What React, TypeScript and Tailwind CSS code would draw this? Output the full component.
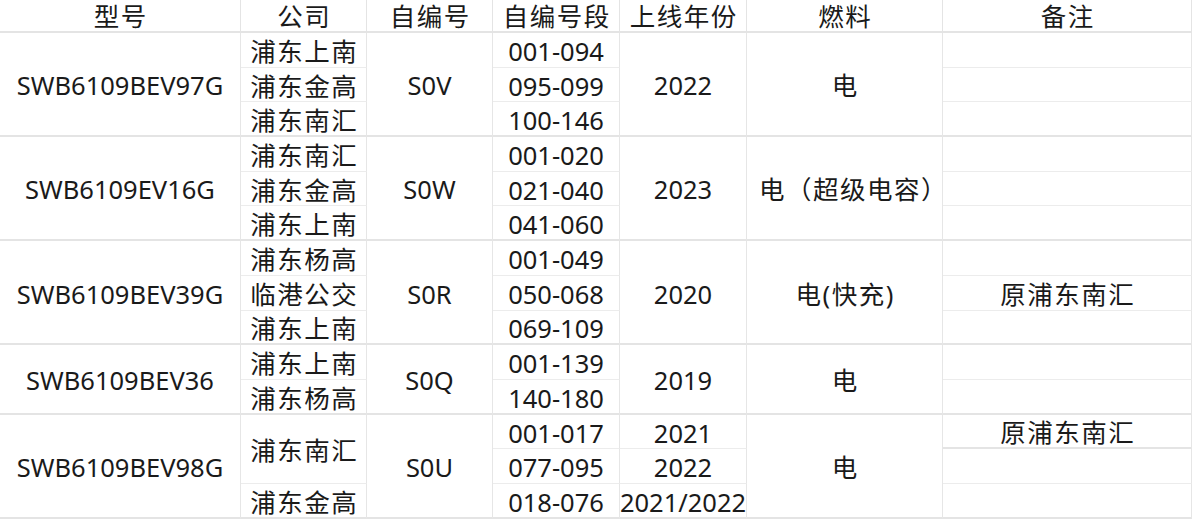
import React from "react";

type Cell = {
  text?: string;
  span?: number;
  end?: boolean;
  extra?: string;
};

const header = ["型号", "公司", "自编号", "自编号段", "上线年份", "燃料", "备注"];

// cells listed row by row; grid auto-placement skips the spanned slots
const cells: Cell[] = [
  // group 1
  { text: "SWB6109BEV97G", span: 3, end: true },
  { text: "浦东上南" },
  { text: "S0V", span: 3, end: true },
  { text: "001-094" },
  { text: "2022", span: 3, end: true },
  { text: "电", span: 3, end: true },
  {},
  { text: "浦东金高" },
  { text: "095-099" },
  {},
  { text: "浦东南汇", end: true },
  { text: "100-146", end: true },
  { end: true },
  // group 2
  { text: "SWB6109EV16G", span: 3, end: true },
  { text: "浦东南汇" },
  { text: "S0W", span: 3, end: true },
  { text: "001-020" },
  { text: "2023", span: 3, end: true },
  { text: "电（超级电容）", span: 3, end: true, extra: "pl-[18px]" },
  {},
  { text: "浦东金高" },
  { text: "021-040" },
  {},
  { text: "浦东上南", end: true },
  { text: "041-060", end: true },
  { end: true },
  // group 3
  { text: "SWB6109BEV39G", span: 3, end: true },
  { text: "浦东杨高" },
  { text: "S0R", span: 3, end: true },
  { text: "001-049" },
  { text: "2020", span: 3, end: true },
  { text: "电(快充)", span: 3, end: true },
  {},
  { text: "临港公交" },
  { text: "050-068" },
  { text: "原浦东南汇" },
  { text: "浦东上南", end: true },
  { text: "069-109", end: true },
  { end: true },
  // group 4
  { text: "SWB6109BEV36", span: 2, end: true },
  { text: "浦东上南" },
  { text: "S0Q", span: 2, end: true },
  { text: "001-139" },
  { text: "2019", span: 2, end: true },
  { text: "电", span: 2, end: true },
  {},
  { text: "浦东杨高", end: true },
  { text: "140-180", end: true },
  { end: true },
  // group 5
  { text: "SWB6109BEV98G", span: 3, end: true },
  { text: "浦东南汇", span: 2 },
  { text: "S0U", span: 3, end: true },
  { text: "001-017" },
  { text: "2021" },
  { text: "电", span: 3, end: true },
  { text: "原浦东南汇", end: true },
  { text: "077-095" },
  { text: "2022" },
  {},
  { text: "浦东金高", end: true },
  { text: "018-076", end: true },
  { text: "2021/2022", end: true },
  { end: true },
];

const spanClass: Record<number, string> = {
  1: "",
  2: "row-span-2",
  3: "row-span-3",
};

const isCjk = (s?: string) => !!s && /[\u4e00-\u9fff]/.test(s);

export default function App() {
  return (
    <div
      className="w-[1192px] h-[520px] overflow-hidden bg-white text-[#1a1a1a]"
      style={{ fontFamily: '"Noto Sans", "Noto Sans CJK SC", sans-serif' }}
    >
      <div className="grid grid-cols-[241px_126px_126px_127px_127px_196px_249px] grid-rows-[33px_repeat(14,34.7px)] text-[25.5px] leading-normal">
        {header.map((h, i) => (
          <div
            key={`head_${i}`}
            className="flex items-center justify-center overflow-visible border-r border-b-2 border-[#e4e4e4] last:border-r-0 pt-[1px] pl-[1.5px] tracking-[1.5px]"
          >
            {h}
          </div>
        ))}
        {cells.map((c, i) => (
          <div
            key={`cell_${i}`}
            className={`flex items-center justify-center whitespace-nowrap pt-[3px] border-r border-[#e6e6e6] ${
              spanClass[c.span ?? 1]
            } ${c.end ? "border-b-2 border-b-[#e4e4e4]" : "border-b border-b-[#ececec]"} ${
              isCjk(c.text) ? "tracking-[1.5px] pl-[1.5px]" : ""
            } ${c.extra ?? ""}`}
          >
            {c.text}
          </div>
        ))}
      </div>
    </div>
  );
}
